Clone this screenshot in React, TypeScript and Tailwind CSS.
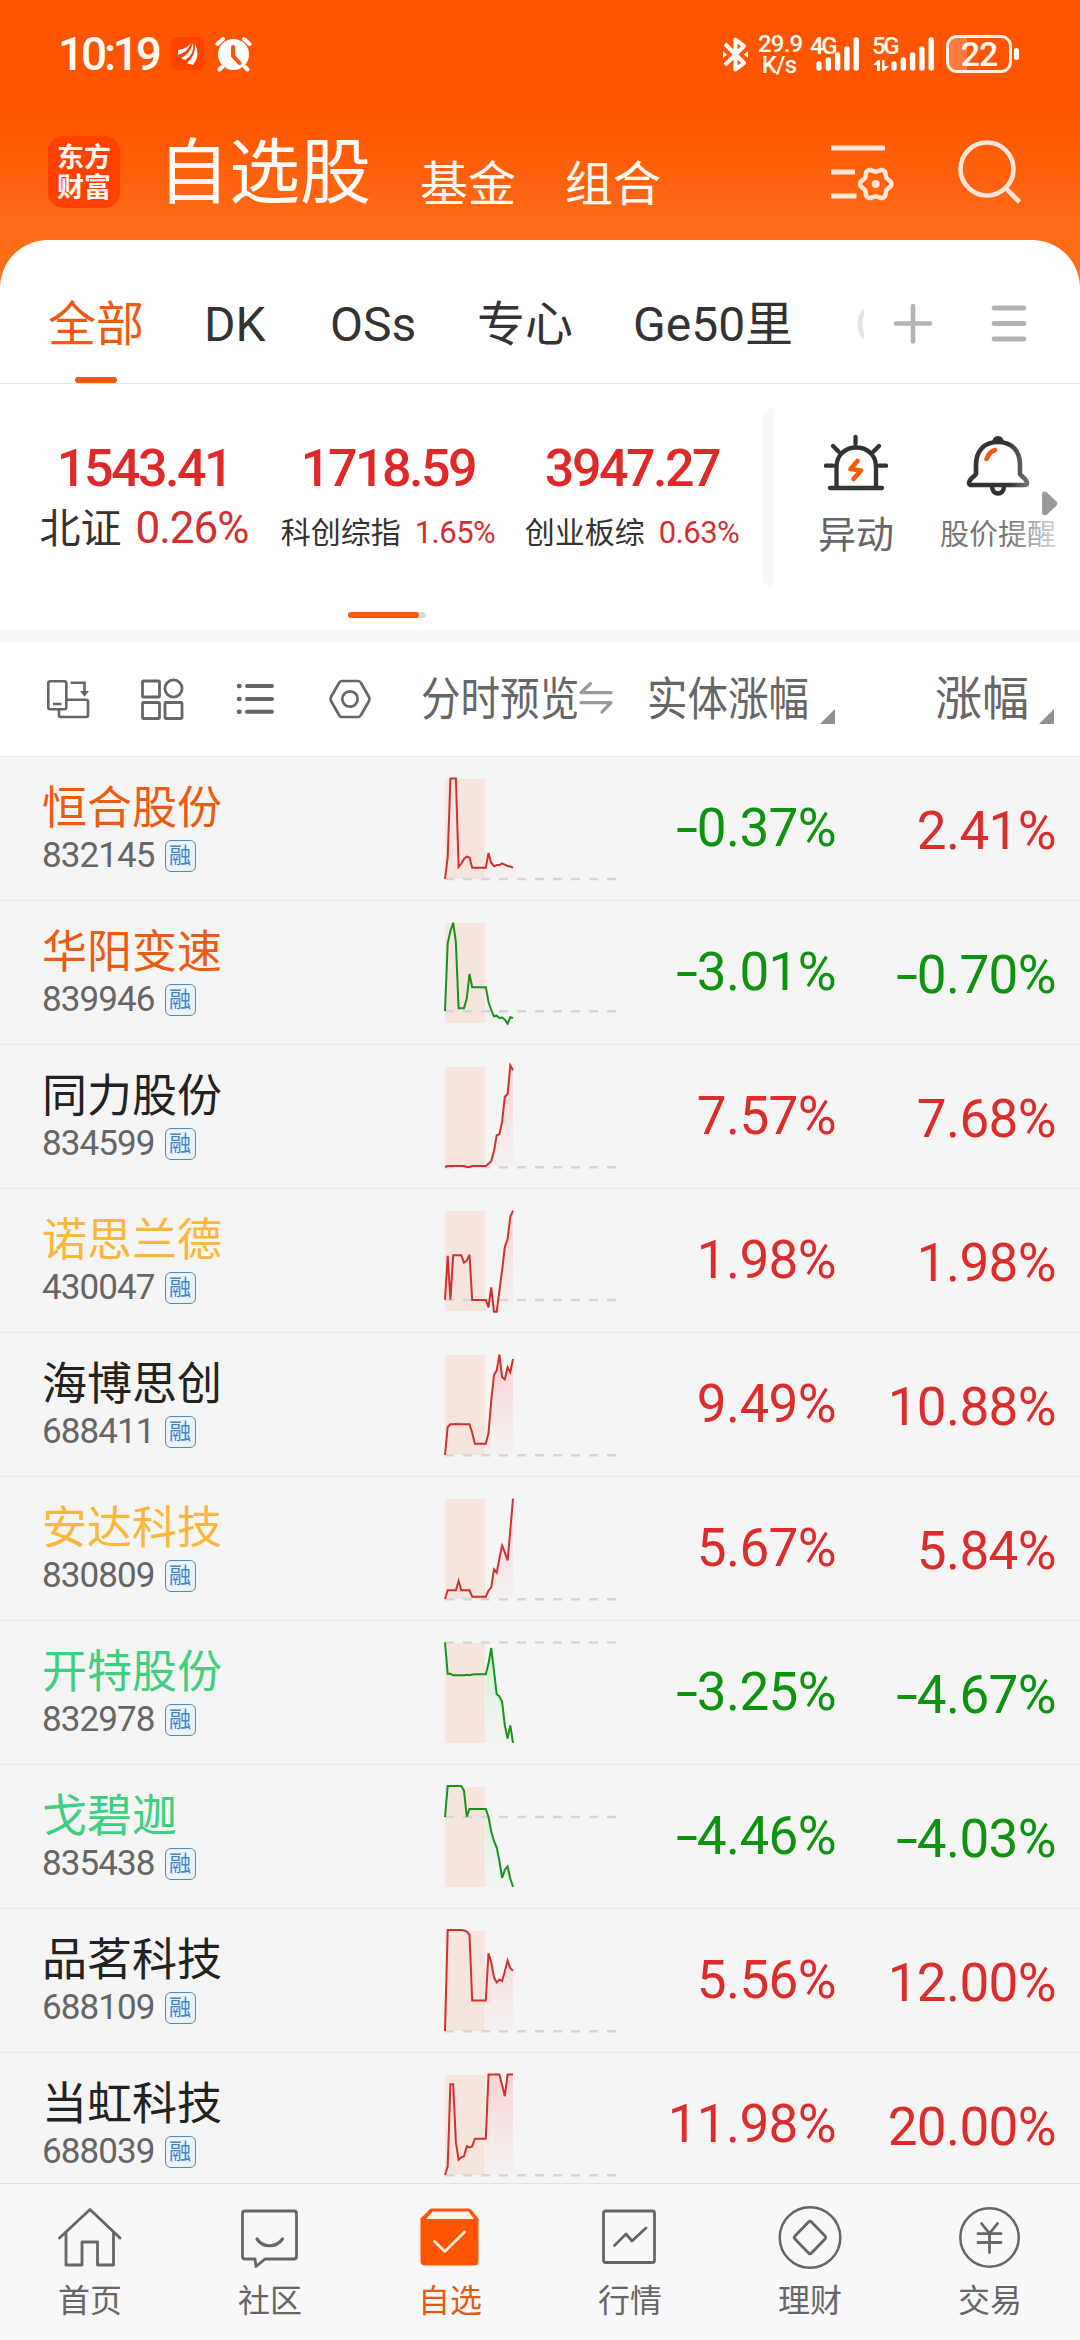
import type { ReactNode } from 'react';
import clsx from 'clsx';

// last 26 ticks of the intraday line, one value per tick, in chart pixels
const stocks = [
  { name: '恒合股份', code: '832145', color: 'text-[#f05a10]', body: '-0.37%', change: '2.41%', base: 123, up: true,
    line: [123, 101, 22.5, 22.5, 22.5, 111, 107.5, 103, 100.7, 101.5, 111.7, 111.7, 111.7, 111.7, 111.7, 111.7, 97, 106.7, 110.3, 109, 109, 107.3, 108.7, 110, 110.5, 111.7] },
  { name: '华阳变速', code: '839946', color: 'text-[#f05a10]', body: '-3.01%', change: '-0.70%', base: 111.3, up: false,
    line: [111, 43.3, 31, 22.7, 42.7, 108.3, 108.3, 108.3, 98.3, 74, 87.3, 87.3, 87.3, 87.3, 87.3, 87.3, 101.7, 110, 116.3, 115.7, 118, 117.5, 119.7, 123.7, 117.3, 118] },
  { name: '同力股份', code: '834599', color: 'text-[#222]', body: '7.57%', change: '7.68%', base: 123.3, up: true,
    line: [123, 122, 122, 122, 122, 122, 122, 122, 123, 123, 122, 122, 122, 122, 122, 122, 119.7, 117.3, 107, 91.3, 90.3, 77.7, 53, 50, 21.3, 26.3] },
  { name: '诺思兰德', code: '430047', color: 'text-[#fcb738]', body: '1.98%', change: '1.98%', base: 112, up: true,
    line: [111.7, 67.7, 111.7, 67.3, 67.3, 67.3, 67.3, 74.7, 72.7, 66.7, 112, 112, 112, 112, 112, 112, 119.3, 99.3, 123.7, 123.7, 102.7, 82.3, 59.3, 50.7, 28.7, 22.7] },
  { name: '海博思创', code: '688411', color: 'text-[#222]', body: '9.49%', change: '10.88%', base: 123.3, up: true,
    line: [123, 95, 92.3, 92.3, 92, 92.3, 92.3, 92.3, 92.3, 92.3, 100.7, 111.7, 111.7, 111.7, 111.7, 111.7, 101, 69, 43, 38.3, 22.7, 45, 47.3, 35.3, 40.3, 27] },
  { name: '安达科技', code: '830809', color: 'text-[#fcb738]', body: '5.67%', change: '5.84%', base: 123.3, up: true,
    line: [123, 114.3, 114.3, 114.3, 114.3, 105, 114.3, 114.3, 114.3, 114.3, 120.7, 120.7, 120.7, 120.7, 120.7, 120.7, 114.7, 111.3, 93.3, 96.7, 82.3, 69.7, 76.3, 84.3, 54, 22.7] },
  { name: '开特股份', code: '832978', color: 'text-[#3ecf80]', body: '-3.25%', change: '-4.67%', base: 22.5, up: false,
    line: [22.5, 53.8, 53.8, 55.3, 55.3, 55.3, 55.3, 55.3, 54.8, 55.3, 54.5, 54.2, 54.2, 54.2, 54.2, 54.2, 43.6, 28, 51, 74.2, 76.3, 81.8, 105.4, 118.5, 105.4, 122.9] },
  { name: '戈碧迦', code: '835438', color: 'text-[#3ecf80]', body: '-4.46%', change: '-4.03%', base: 53, up: false,
    line: [53, 22.1, 22.1, 22.1, 22.1, 22.1, 22.1, 26.8, 52.7, 45, 45, 45, 45, 45, 45, 45, 53, 67.6, 77, 83.6, 97, 114, 106, 102.5, 114.5, 122.8] },
  { name: '品茗科技', code: '688109', color: 'text-[#222]', body: '5.56%', change: '12.00%', base: 123.3, up: true,
    line: [123, 22.1, 22.1, 22.1, 22.1, 22.1, 22.1, 22.4, 23.5, 26.8, 92.6, 92.6, 92.6, 92.6, 92.6, 92.6, 45.3, 53.7, 69.3, 74.4, 71.5, 73, 63.5, 52.6, 60.2, 62.8] },
  { name: '当虹科技', code: '688039', color: 'text-[#222]', body: '11.98%', change: '20.00%', base: 123.3, up: true,
    line: [123, 114.3, 32.2, 32.2, 90.4, 107.8, 105.3, 104.2, 94.4, 95.4, 94.4, 86.7, 86.7, 86.7, 86.7, 86.7, 22.4, 22.4, 22.4, 22.4, 22.4, 33, 44.2, 22.4, 22.4, 22.4] },
];

const indices = [
  { name: '北证', value: '1543.41', change: '0.26%', large: true },
  { name: '科创综指', value: '1718.59', change: '1.65%', large: false },
  { name: '创业板综', value: '3947.27', change: '0.63%', large: false },
];

const STEP = 2.72;

function Spark({ line, base, up }: { line: number[]; base: number; up: boolean }) {
  const pts = line.map((y, i) => `${(1 + i * STEP).toFixed(1)},${y}`);
  const area = [...pts.slice(15), `${1 + 25 * STEP},123`, `${1 + 15 * STEP},123`].join(' ');
  return (
    <svg width="174" height="144" viewBox="0 0 174 144" fill="none">
      <defs>
        <linearGradient id="fade-up" gradientUnits="userSpaceOnUse" x1="0" y1="22" x2="0" y2="123">
          <stop offset="0" stopColor="#f9c9cb" stopOpacity="0.8" />
          <stop offset="1" stopColor="#f5eeee" stopOpacity="0.6" />
        </linearGradient>
        <linearGradient id="fade-down" gradientUnits="userSpaceOnUse" x1="0" y1="22" x2="0" y2="123">
          <stop offset="0" stopColor="#bff0c4" stopOpacity="0.9" />
          <stop offset="0.8" stopColor="#eef3ee" stopOpacity="0.7" />
        </linearGradient>
      </defs>
      <rect x="1" y="23" width="40" height="100" fill="#f6e5dc" />
      <polygon points={area} fill={up ? 'url(#fade-up)' : 'url(#fade-down)'} />
      <path d={`M1 ${base}H172`} stroke="#d3d6db" strokeWidth="2.4" strokeDasharray="9 9" />
      <polyline points={pts.join(' ')} stroke={up ? '#d42f2f' : '#1a911a'} strokeWidth="2" />
    </svg>
  );
}

function Percent({ value, className }: { value: string; className: string }) {
  const down = value.startsWith('-');
  return (
    <div className={clsx('text-right text-[53px] leading-[60px] tracking-[-0.6px] whitespace-nowrap', down ? 'text-[#0d930f]' : 'text-[#dd2c2c]', className)}>
      {down && <span className="inline-block origin-right scale-x-150">-</span>}
      {down ? value.slice(1) : value}
    </div>
  );
}

function Signal() {
  return (
    <svg width="44" height="36" viewBox="0 0 44 36" stroke="#fff" strokeWidth="5.4" strokeLinecap="round">
      {[25, 21, 16, 10, 1].map((y, i) => <path key={y} d={`M${3 + i * 9.3} ${y + 3}V32`} />)}
    </svg>
  );
}

function StatusBar() {
  return (
    <div className="h-[108px] pt-[34px] pl-[58px] pr-[61px] flex justify-between">
      <div className="flex items-start">
        <span className="w-[113px] text-[46px] leading-[40px] tracking-[-3.2px] font-medium">10:19</span>
        <svg className="mt-[3px]" width="33" height="33" viewBox="0 0 33 33">
          <rect width="33" height="33" rx="7" fill="#ff4200" />
          <path d="M7 13Q15 12 20 6Q17 15 7 18ZM10 21Q19 17 22 6Q24 17 14 23ZM16 26Q25 18 24 7Q30 18 22 28Z" fill="#fff" />
        </svg>
        <svg className="mt-[1px] ml-[11px]" width="37" height="38" viewBox="0 0 37 38" fill="none" strokeLinecap="round">
          <circle cx="18.5" cy="19.5" r="15.5" fill="#fff" />
          <path d="M2.5 9L8 4M34.5 9L29 4M7 32L4.5 34.5M30 32L32.5 34.5" stroke="#fff" strokeWidth="4" />
          <path d="M18 12V21L24.5 28" stroke="#ff5500" strokeWidth="4" />
        </svg>
      </div>
      <div className="flex items-start">
        <svg className="mt-[2px] mr-[9px]" width="27" height="37" viewBox="0 0 27 37" fill="none" stroke="#fff" strokeWidth="4" strokeLinejoin="round">
          <path d="M3 8L22 27L13.5 33.5V3.5L22 10L3 29" />
          <path d="M1 15L5 18.5L1 22ZM26 15L22 18.5L26 22Z" fill="#fff" stroke="none" />
        </svg>
        <div className="w-[42px] text-center text-[24px] leading-[21px] font-medium tracking-[-0.8px] whitespace-nowrap">
          <div>29.9</div>
          <div>K/s</div>
        </div>
        <div className="relative ml-[16px] w-[52px]">
          <span className="absolute -left-[6px] top-[1px] text-[24px] leading-[22px] font-medium tracking-[-2.5px]">4G</span>
          <div className="pt-[2px]"><Signal /></div>
        </div>
        <div className="relative ml-[6px] w-[62px] pl-[17px]">
          <span className="absolute left-[-2px] top-[1px] text-[24px] leading-[22px] font-medium tracking-[-2.5px]">5G</span>
          <svg className="absolute -left-px top-[26px]" width="16" height="11" viewBox="0 0 16 11" fill="#fff">
            <path d="M0 5L5 0H7V11H4V5ZM9 0H11.5V6H16L11 11H9Z" />
          </svg>
          <div className="pt-[2px]"><Signal /></div>
        </div>
        <div className="ml-[10px] mt-px w-[66px] h-[38px] shrink-0 rounded-[11px] border-[3px] border-[#fff1e8] bg-linear-to-r from-[#ff7a3d] from-30% to-transparent to-30% text-center text-[34px] leading-[33px] font-medium tracking-[-1px]">22</div>
        <div className="ml-[2px] mt-[14px] w-[5px] h-[12px] rounded-full bg-white" />
      </div>
    </div>
  );
}

// six-lobed outline of the settings gear
const gear = Array.from({ length: 72 }, (_, i) => {
  const a = (i * Math.PI) / 36;
  const r = 14 + 1.7 * Math.cos(6 * a);
  return `${(47.7 + r * Math.cos(a)).toFixed(1)},${(44 + r * Math.sin(a)).toFixed(1)}`;
}).join(' ');

function TitleBar() {
  return (
    <div className="h-[132px] flex items-start">
      <div className="ml-[48px] mt-[28px] w-[72px] h-[72px] rounded-[15px] bg-[#ff4200] pt-[7px] text-center text-[27px] leading-[30px] font-bold">
        东方<br />财富
      </div>
      <h1 className="ml-[38px] mt-[29px] text-[71px] leading-[72px]">自选股</h1>
      <span className="ml-[49px] mt-[47px] text-[48px] leading-[60px]">基金</span>
      <span className="ml-[49px] mt-[47px] text-[48px] leading-[60px]">组合</span>
      <svg className="ml-auto mt-[32px]" width="70" height="64" viewBox="0 0 70 64" fill="none" stroke="#ffe6d6" strokeWidth="5">
        <path d="M3 8H57M3 32H27M3 56H28.5" />
        <polygon points={gear} strokeWidth="4.5" />
        <circle cx="47.7" cy="44" r="4" fill="#ffe6d6" stroke="none" />
      </svg>
      <svg className="ml-[57px] mr-[55px] mt-[32px]" width="70" height="66" viewBox="0 0 70 66" fill="none" stroke="#ffe6d6" strokeWidth="4.6">
        <circle cx="32" cy="29" r="26.5" />
        <path d="M50 47.5L64.5 62" />
      </svg>
    </div>
  );
}

function Tabs() {
  return (
    <div className="h-[144px] border-b-[1.5px] border-[#e4e4e4] flex items-start text-[48px] leading-[60px] text-[#333] whitespace-nowrap">
      <div className="ml-[48px] mt-[55px] w-[156px] h-[89px] text-[#f05a10]">
        全部
        <div className="ml-[27px] mt-[22px] w-[42px] h-[6px] rounded-full bg-[#f55a0a]" />
      </div>
      <div className="mt-[55px] w-[126px]">DK</div>
      <div className="mt-[55px] w-[147px]">OSs</div>
      <div className="mt-[55px] w-[156px]">专心</div>
      <div className="mt-[55px] w-[222px]">Ge50里</div>
      <div className="mt-[55px] w-[9px] overflow-hidden text-[#e2e2e2]">C</div>
      <svg className="ml-[29px] mt-[62px]" width="40" height="42" viewBox="0 0 40 42" stroke="#b3b3b3" strokeWidth="4.6" strokeLinecap="round">
        <path d="M3 21.500H37M20 4V39.500" />
      </svg>
      <svg className="ml-[57px] mt-[62px]" width="40" height="42" viewBox="0 0 40 42" stroke="#b3b3b3" strokeWidth="4.8" strokeLinecap="round">
        <path d="M4 6H34M4 21.500H34M4 37H34" />
      </svg>
    </div>
  );
}

function MarketStrip() {
  return (
    <div className="relative h-[246px] bg-white">
      <div className="flex pl-[22px]">
        {indices.map((item) => (
          <div key={item.name} className="w-[244px] pt-[55px] flex flex-col items-center whitespace-nowrap">
            <div className="text-[52px] leading-[60px] tracking-[-2.5px] font-medium text-[#e12828]">{item.value}</div>
            <div className={clsx('flex items-baseline gap-[14px] leading-[50px] text-[#333]', item.large ? 'mt-[4px] text-[41px]' : 'mt-[9px] text-[30px]')}>
              <span>{item.name}</span>
              <span className={clsx('text-[#d23030]', item.large ? 'text-[44px] tracking-[-1px]' : 'text-[31px] tracking-[-0.5px]')}>{item.change}</span>
            </div>
          </div>
        ))}
        <div className="ml-[8px] mt-[24px] w-[12px] h-[180px] rounded-l-[12px] bg-[#f7f8fb]" />
        <div className="ml-[34px] mt-[50px] w-[96px] flex flex-col items-center text-[#666]">
          <svg width="64" height="60" viewBox="0 0 64 60" fill="none" stroke="#333" strokeWidth="4.3" strokeLinecap="round">
            <path d="M12.5 54V33C12.5 7 52 7 52 33V54M6 54H58M31.5 3V10M2 31.7H9M55 31.7H62M9 12L14.5 17.5M55 12L49.5 17.5" />
            <path d="M33.5 27L26.5 35L37 36.5L29.5 45" stroke="#f55a0a" strokeWidth="4.6" strokeLinejoin="round" />
          </svg>
          <span className="mt-[16px] text-[38px] leading-[50px]">异动</span>
        </div>
        <div className="relative ml-[33px] mt-[50px] w-[122px] flex flex-col items-center text-[#777]">
          <svg width="64" height="64" viewBox="0 0 64 64" fill="none" stroke="#333" strokeWidth="4.6">
            <path d="M10 40V31C10 17 18 8 32 8S54 17 54 31V40C56 43 61 45 61 49Q61 51 58 51H6Q3 51 3 49C3 45 8 43 10 40Z" strokeLinejoin="round" />
            <path d="M26 8Q27 2 32 2T38 8Z" fill="#333" stroke="none" />
            <path d="M26 52C26 62 38 62 38 52" />
            <path d="M20.5 25Q23 18 29 16" stroke="#f55a0a" strokeLinecap="round" />
          </svg>
          <span className="mt-[12px] text-[29px] leading-[50px] whitespace-nowrap">股价提醒</span>
          <div className="absolute right-0 top-0 w-[52px] h-[130px] bg-linear-to-r from-white/0 to-white/75" />
          <svg className="absolute right-[1px] top-[57px]" width="16" height="25" viewBox="0 0 16 25" fill="#999">
            <path d="M0 3Q1 -1 5 1.5L14.5 10.5Q16 12.5 14.5 14.5L5 23.5Q1 26 0 22Z" />
          </svg>
        </div>
      </div>
      <div className="absolute left-[348px] top-[228px] w-[78px] h-[6px] rounded-full bg-[#d8d8d8]">
        <div className="w-[71px] h-full rounded-full bg-[#fa5b05]" />
      </div>
    </div>
  );
}

function Corner({ className }: { className: string }) {
  return (
    <svg className={className} width="15" height="15" viewBox="0 0 15 15" fill="#8f8f96">
      <path d="M15 0V15H0Z" />
    </svg>
  );
}

function ListHeader() {
  return (
    <div className="h-[114px] bg-white flex items-start text-[46px] leading-[60px] text-[#666] whitespace-nowrap">
      <div className="ml-[46px] mt-[36px] mr-[49px] w-[326px] flex justify-between">
        <svg width="44" height="44" viewBox="0 0 44 44" fill="none" stroke="#666" strokeWidth="2.6">
          <rect x="2.3" y="3.3" width="18" height="28" rx="2" />
          <path d="M7 26H15.5M20.5 21.7H40Q42 21.7 42 23.7V37Q42 39 40 39H15Q13 39 13 37V32M24.6 4.7H38.5V15" />
          <path d="M34 13H43L38.5 18.7Z" fill="#666" stroke="none" />
        </svg>
        <svg width="44" height="44" viewBox="0 0 44 44" fill="none" stroke="#666" strokeWidth="2.8">
          <rect x="2.5" y="3" width="17" height="16" rx="1" />
          <circle cx="33.5" cy="10.5" r="8.6" />
          <rect x="2.5" y="24.5" width="17" height="16" rx="1" />
          <rect x="25" y="24.5" width="17" height="16" rx="1" />
        </svg>
        <svg width="44" height="44" viewBox="0 0 44 44" fill="none" stroke="#666" strokeWidth="4" strokeLinecap="round">
          <path d="M5 8H5.500M5 21H5.500M5 33.700H5.500" strokeWidth="4.6" />
          <path d="M13 8H38M13 21H38M13 33.700H38" />
        </svg>
        <svg width="44" height="44" viewBox="0 0 44 44" fill="none" stroke="#666" strokeWidth="2.7" strokeLinejoin="round">
          <path d="M14 3H30Q32 3 33 5L41 19Q42 21 41 23L33 37Q32 39 30 39H14Q12 39 11 37L3 23Q2 21 3 19L11 5Q12 3 14 3Z" />
          <circle cx="22" cy="21" r="7.7" />
        </svg>
      </div>
      <div className="mt-[27px] w-[157px]">
        <span className="inline-block origin-left scale-x-[0.86]">分时预览</span>
      </div>
      <svg className="mt-[38px]" width="36" height="36" viewBox="0 0 36 36" fill="none" stroke="#999" strokeWidth="3.2" strokeLinecap="round" strokeLinejoin="round">
        <path d="M12.5 3.5L3 12.7H33M3 22.7H33L24 32" />
      </svg>
      <div className="ml-[33px] mt-[27px] w-[173px]">
        <span className="inline-block origin-left scale-x-[0.88]">实体涨幅</span>
      </div>
      <Corner className="mt-[67px]" />
      <span className="ml-auto mt-[27px] text-[47px]">涨幅</span>
      <Corner className="ml-[10px] mr-[26px] mt-[67px]" />
    </div>
  );
}

function NavItem({ label, active, children }: { label: string; active?: boolean; children: ReactNode }) {
  return (
    <div className={clsx('flex flex-col items-center pt-[21px] text-[32px] leading-[40px]', active ? 'text-[#e35a15]' : 'text-[#666]')}>
      <svg width="64" height="66" viewBox="0 0 64 66" fill="none" stroke="currentColor" strokeWidth="2.8" strokeLinecap="round" strokeLinejoin="round">
        {children}
      </svg>
      <span className="mt-[10px]">{label}</span>
    </div>
  );
}

function BottomNav() {
  return (
    <nav className="h-[157px] shrink-0 border-t border-[#e0e1e3] bg-[#f8f8fb] grid grid-cols-6">
      <NavItem label="首页">
        <path d="M1.5 33L32 4.5L62 33M8 28V60H24V37H39.5V60H55.5V28" />
      </NavItem>
      <NavItem label="社区">
        <path d="M7 6H56Q58.5 6 58.5 8.5V51.5Q58.5 54 56 54H27L18 61.5L17 54H7Q4.5 54 4.5 51.5V8.5Q4.5 6 7 6Z" />
        <path d="M19 34C25 43 38 43 44.5 34" strokeWidth="3.2" />
      </NavItem>
      <NavItem label="自选" active>
        <path d="M14 3.5H50.5Q52 3.5 53 4.5L60.5 13.5V56Q60.5 60.5 56 60.5H7Q2.5 60.5 2.5 56V13.5L11.5 4.5Q12.5 3.5 14 3.5Z" fill="#ff5500" stroke="none" />
        <path d="M14.5 6.5H50.5L56 14H8Z" fill="#fdf3ee" stroke="none" />
        <path d="M16.5 36.5L26.8 46.5L46.5 27" stroke="#ffe8dc" />
      </NavItem>
      <NavItem label="行情">
        <rect x="5.5" y="6" width="51" height="51.5" rx="2" />
        <path d="M16.5 40.5L28 29L34 36L48 23" />
      </NavItem>
      <NavItem label="理财">
        <circle cx="32" cy="32.5" r="30.3" strokeWidth="2.5" />
        <path d="M30.5 17Q32 15.5 33.5 17L47 31Q48.5 32.5 47 34L33.5 48Q32 49.5 30.5 48L17 34Q15.5 32.5 17 31Z" />
      </NavItem>
      <NavItem label="交易">
        <circle cx="31.5" cy="32.5" r="29.2" strokeWidth="2.5" />
        <path d="M23.5 18.5L31.5 28.5L39.5 18.5M20 28.7H43M20 37.5H43M31.5 28.7V47.5" />
      </NavItem>
    </nav>
  );
}

export default function App() {
  return (
    <div className="w-[1080px] h-[2340px] overflow-hidden flex flex-col bg-linear-to-b from-[#ff5500] from-[115px] to-[#ff6d18] to-[240px] font-[Roboto,'Noto_Sans_CJK_SC',sans-serif]">
      <header className="h-[240px] shrink-0 text-[#fffaf5]">
        <StatusBar />
        <TitleBar />
      </header>

      <main className="flex-1 min-h-0 overflow-hidden rounded-t-[48px] bg-white">
        <Tabs />
        <MarketStrip />
        <div className="h-[12px] bg-[#f6f7fa]" />
        <ListHeader />

        {/* Watchlist rows */}
        {stocks.map((s) => (
          <div key={s.code} className="h-[144px] border-t border-[#ebebeb] bg-[#f5f5f5] flex items-start">
            <div className="w-[444px] pl-[42px] pt-[26px]">
              <div className={clsx('text-[45px] leading-[52px]', s.color)}>{s.name}</div>
              <div className="mt-[4px] flex items-center gap-[10px] text-[35px] leading-[34px] tracking-[-0.9px] text-[#666]">
                {s.code}
                <span className="w-[31px] h-[32px] rounded-[6px] border border-[#4d8cca] bg-[#eaf3fc] text-center text-[22px] leading-[29px] tracking-normal text-[#4084c8]">融</span>
              </div>
            </div>
            <div className="-mt-px w-[174px] shrink-0"><Spark line={s.line} base={s.base} up={s.up} /></div>
            <Percent value={s.body} className="mt-[41px] w-[218px]" />
            <Percent value={s.change} className="mt-[44px] w-[220px]" />
          </div>
        ))}
      </main>

      <BottomNav />
    </div>
  );
}
